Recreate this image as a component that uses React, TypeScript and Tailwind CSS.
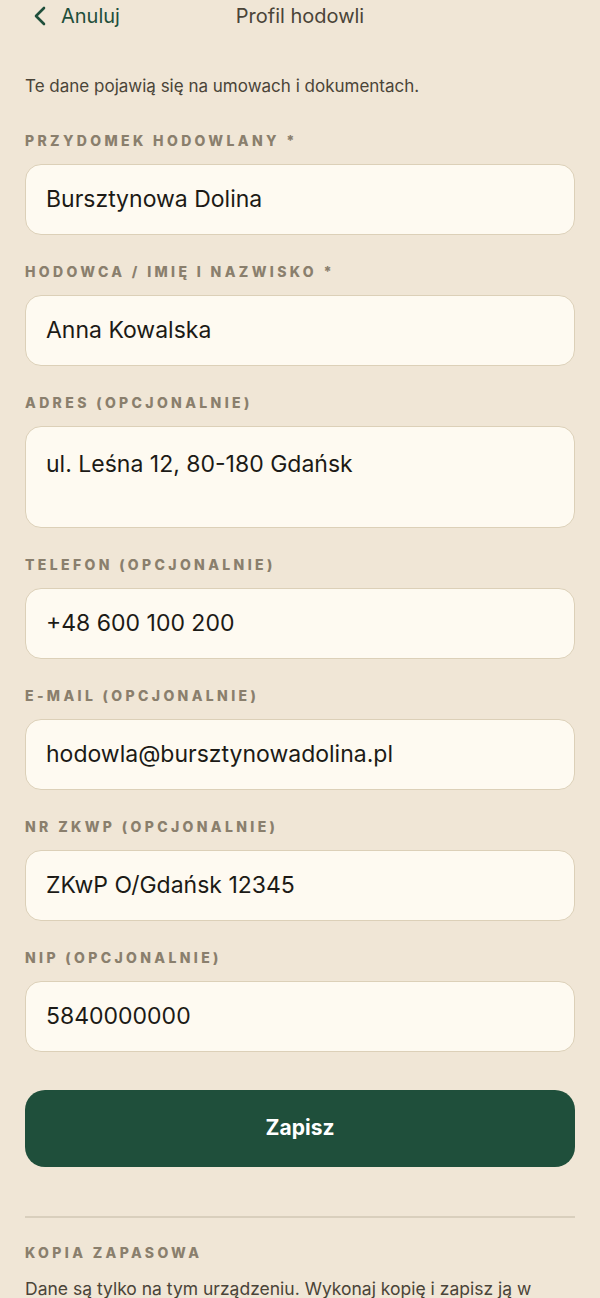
import React from "react";

interface Field {
  label: string;
  value: string;
  multiline?: boolean;
}

const fields: Field[] = [
  { label: "Przydomek hodowlany *", value: "Bursztynowa Dolina" },
  { label: "Hodowca / imię i nazwisko *", value: "Anna Kowalska" },
  { label: "Adres (opcjonalnie)", value: "ul. Leśna 12, 80-180 Gdańsk", multiline: true },
  { label: "Telefon (opcjonalnie)", value: "+48 600 100 200" },
  { label: "E-mail (opcjonalnie)", value: "hodowla@bursztynowadolina.pl" },
  { label: "Nr ZKwP (opcjonalnie)", value: "ZKwP O/Gdańsk 12345" },
  { label: "NIP (opcjonalnie)", value: "5840000000" },
];

const FieldRow: React.FC<{ field: Field }> = ({ field }) => {
  return (
    <div className="flex flex-col">
      <span className="text-[14px] font-extrabold uppercase tracking-[0.24em] text-[#8a7f6d] leading-4">
        {field.label}
      </span>
      <div
        className={
          field.multiline
            ? "mt-[15px] h-[102px] rounded-2xl border border-[#dcd0b8] bg-[#fefaf1] px-5 pt-[20px] text-[23px] text-[#1c1a16]"
            : "mt-[15px] h-[71px] rounded-2xl border border-[#dcd0b8] bg-[#fefaf1] px-5 flex items-center text-[23px] text-[#1c1a16]"
        }
      >
        {field.value}
      </div>
    </div>
  );
};

export default function App() {
  return (
    <div
      className="min-h-[1298px] w-[600px] bg-[#f0e6d6] px-[25px]"
      style={{ fontFamily: "Inter, 'Noto Sans', sans-serif" }}
    >
      <div className="relative flex h-[32px] items-center">
        <button className="flex items-center gap-[14px] pl-[8px] text-[20px] text-[#1f4f3b]">
          <svg width="14" height="20" viewBox="0 0 14 20" fill="none">
            <path d="M11 2 L3 10 L11 18" stroke="#1f4f3b" strokeWidth="2.6" strokeLinecap="round" strokeLinejoin="round" />
          </svg>
          <span>Anuluj</span>
        </button>
        <span className="absolute left-1/2 -translate-x-1/2 text-[20px] text-[#4a4438]">
          Profil hodowli
        </span>
      </div>

      <p className="mt-[42px] text-[17px] text-[#4a4438]">
        Te dane pojawią się na umowach i dokumentach.
      </p>

      <div className="mt-[33px] flex flex-col gap-[29px]">
        {fields.map((f) => (
          <FieldRow key={f.label} field={f} />
        ))}
      </div>

      <button className="mt-[38px] h-[77px] w-full rounded-[20px] bg-[#1f4f3b] text-[21px] font-bold text-white">
        Zapisz
      </button>

      <div className="mt-[49px] h-[2px] bg-[#d9cfbd]" />

      <div className="mt-[24px] text-[14px] font-extrabold uppercase tracking-[0.24em] text-[#8a7f6d]">
        Kopia zapasowa
      </div>
      <p className="mt-[13px] text-[17.5px] text-[#4a4438]">
        Dane są tylko na tym urządzeniu. Wykonaj kopię i zapisz ją w bezpiecznym miejscu.
      </p>
    </div>
  );
}
